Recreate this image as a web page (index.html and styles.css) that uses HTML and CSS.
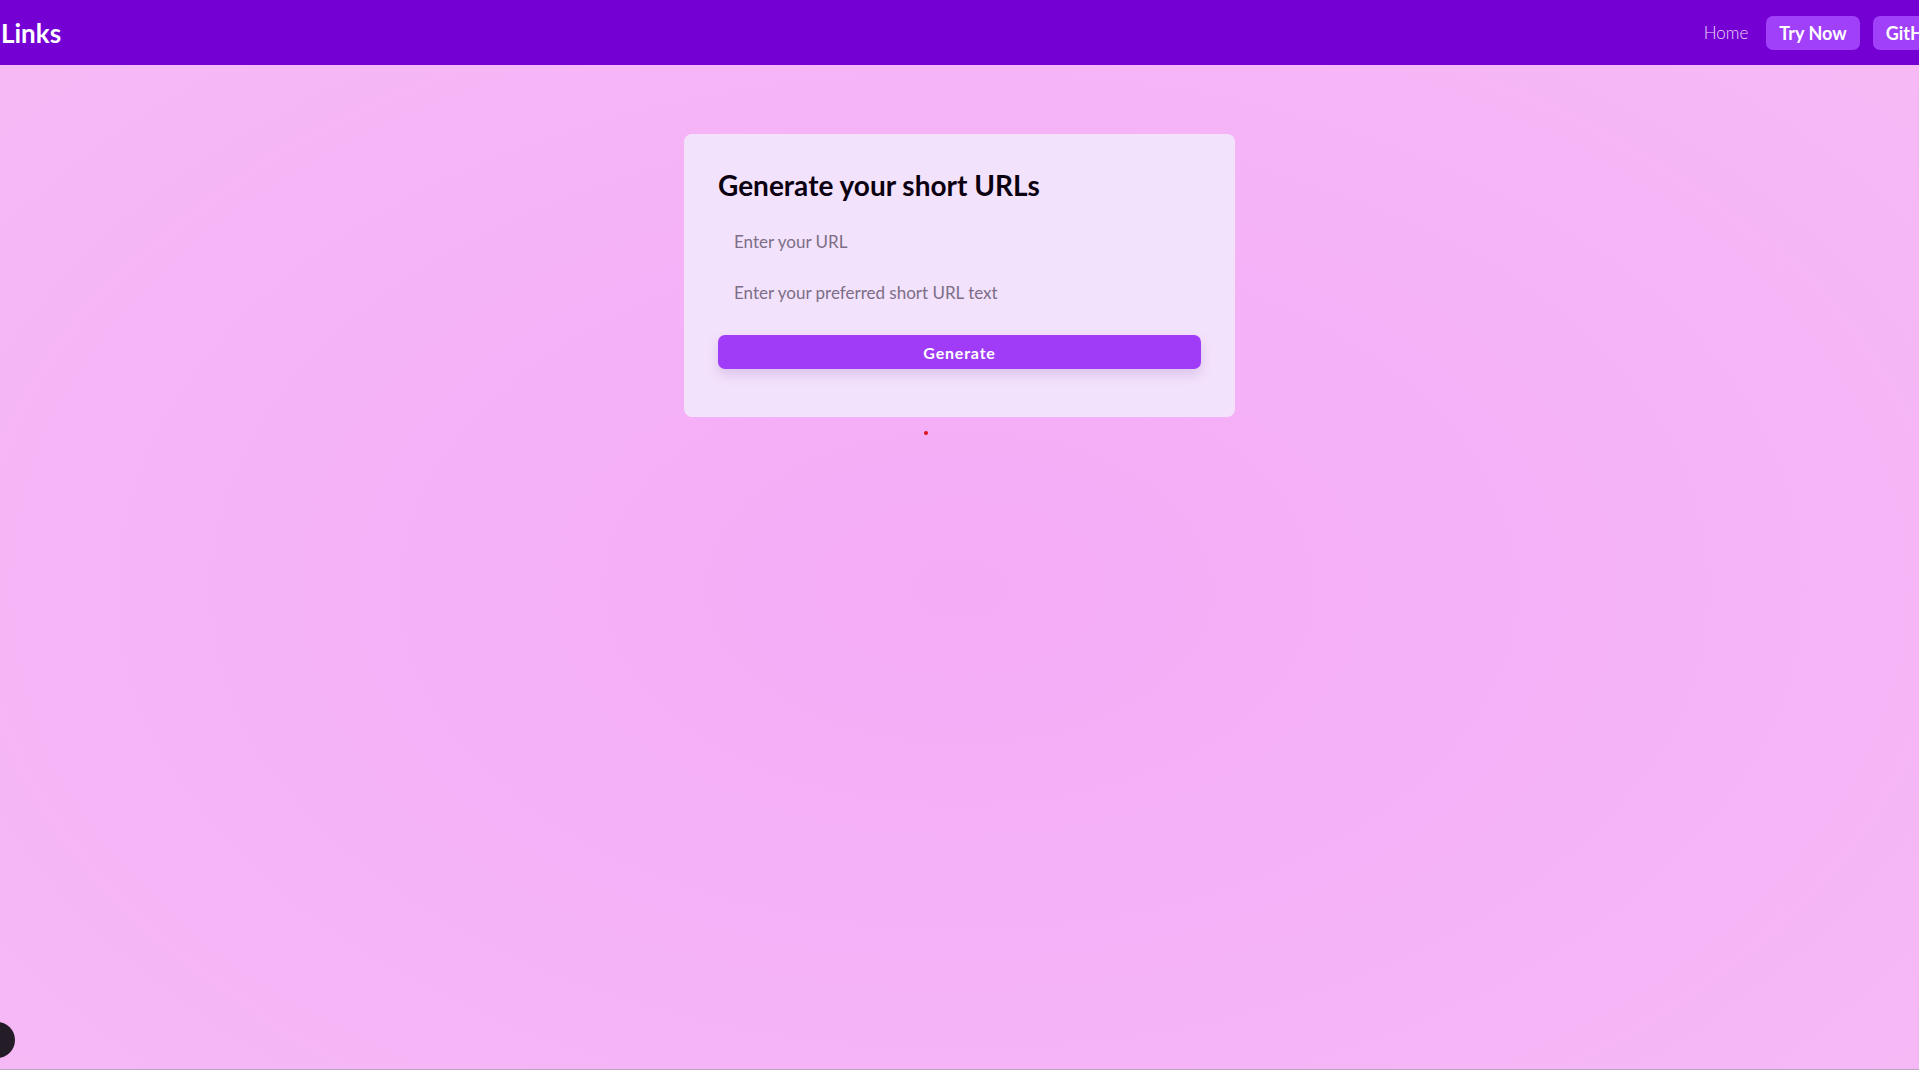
FILE: index.html
```html
<!DOCTYPE html>
<html lang="en">
<head>
<meta charset="utf-8">
<title>Links</title>
<link rel="stylesheet" href="styles.css">
</head>
<body>
<header class="nav">
  <div class="nav-inner">
    <div class="brand">Links</div>
    <nav class="nav-links">
      <a class="nav-home" href="#">Home</a>
      <a class="nav-btn" href="#">Try Now</a>
      <a class="nav-btn" href="#">GitHub</a>
    </nav>
  </div>
</header>
<main class="main">
  <div class="column">
    <section class="card">
      <h1 class="title">Generate your short URLs</h1>
      <input class="field" type="text" placeholder="Enter your URL">
      <input class="field" type="text" placeholder="Enter your preferred short URL text">
      <button class="gen-btn" type="button">Generate</button>
    </section>
    <div class="status"><span class="dot"></span></div>
  </div>
</main>
<div class="float-btn"></div>
</body>
</html>
```
FILE: styles.css
```css
html, body {
  margin: 0;
  padding: 0;
  height: 100%;
}
body {
  font-family: Lato, "Noto Sans", sans-serif;
  background: radial-gradient(ellipse at 50% 55%, #f4acf6 0%, #f5b2f7 45%, #f6baf6 100%);
  min-height: 1070px;
  box-sizing: border-box;
  border-bottom: 1px solid #b8a6bd;
  overflow: hidden;
}
.nav {
  background: #7400d4;
  height: 65px;
  overflow: hidden;
}
.nav-inner {
  width: calc(100% + 38px);
  height: 100%;
  display: flex;
  align-items: center;
  justify-content: space-between;
}
.brand {
  color: #fff;
  font-weight: 700;
  font-size: 26px;
  padding-left: 1px;
}
.nav-links {
  display: flex;
  align-items: center;
  gap: 13px;
}
.nav-home {
  color: #ecd9f8;
  text-decoration: none;
  font-size: 17px;
  font-weight: 300;
  margin-right: 5px;
}
.nav-btn {
  background: #a040f8;
  color: #fff;
  text-decoration: none;
  font-weight: 700;
  font-size: 18px;
  height: 34px;
  line-height: 34px;
  padding: 0 13px;
  border-radius: 7px;
}
.main {
  display: flex;
  justify-content: center;
  padding: 69px 0 0 0;
}
.column {
  width: 551px;
}
.card {
  background: #f3e2fc;
  border-radius: 8px;
  padding: 34px 34px 48px;
  display: flex;
  flex-direction: column;
}
.title {
  margin: 0 0 14px;
  font-size: 28px;
  font-weight: 700;
  color: #0b0010;
  line-height: 34px;
}
.field {
  border: none;
  background: transparent;
  font-family: inherit;
  font-size: 17px;
  padding: 0 16px;
  height: 51px;
  outline: none;
  color: #333;
}
.field::placeholder {
  color: #7c6e86;
}
.gen-btn {
  margin-top: 17px;
  height: 34px;
  border: none;
  border-radius: 7px;
  background: #a03cf8;
  color: #fff;
  font-family: inherit;
  font-weight: 700;
  font-size: 16px;
  letter-spacing: 0.8px;
  box-shadow: 0 6px 12px rgba(120, 60, 160, 0.18);
}
.status {
  padding-top: 14px;
  height: 3px;
}
.dot {
  display: block;
  width: 4px;
  height: 4px;
  border-radius: 50%;
  background: #e0101a;
  margin-left: 240px;
}
.float-btn {
  position: fixed;
  left: -21px;
  top: 1022px;
  width: 36px;
  height: 36px;
  border-radius: 50%;
  background: #241c26;
}
```
